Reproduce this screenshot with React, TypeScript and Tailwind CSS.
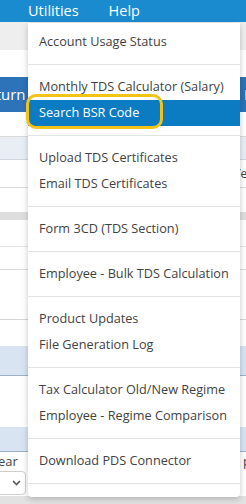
import React from "react";

const Sep = () => <div className="my-[9px] h-px bg-[#e3e3e3]" />;

const Item = ({ label, active }: { label: string; active?: boolean }) => (
  <div
    className={
      "flex h-[26px] items-center whitespace-nowrap px-[11px] text-[12.7px] " +
      (active ? "bg-[#0c7cc2] text-white" : "text-[#424242]")
    }
  >
    {label}
  </div>
);

export default function App() {
  return (
    <div className="relative h-[504px] w-[246px] overflow-hidden bg-white font-['Open_Sans',sans-serif]">
      {/* background page */}
      <div className="flex h-[22px] items-center bg-[#1b8bd0] text-[14.5px] text-white">
        <span className="ml-[28px]">Utilities</span>
        <span className="ml-[30px]">Help</span>
      </div>
      <div className="h-[28px] bg-[#eeeeee]" />
      <div className="h-[27px] bg-white" />
      <div className="flex h-[35px] items-center justify-between bg-[#2c73b9] text-[15px] text-white">
        <span className="-ml-[22px]">Return</span>
        <span className="-mr-[14px]">Fa</span>
      </div>
      <div className="h-[25px] border-b border-[#d9d9d9] bg-white" />
      <div className="h-[23px] border-b border-[#cfd6de] bg-[#e9eef5]" />
      <div className="flex h-[28px] items-center justify-end border-b border-[#dcdcdc] bg-white text-[12px] text-[#444]">
        <span className="-mr-[8px]">Yea</span>
      </div>
      <div className="h-[24px] bg-white" />
      <div className="h-[8px] bg-[#dedede]" />
      <div className="h-[27px] border-b border-[#e6e6e6] bg-white" />
      <div className="h-[23px] border-b border-[#dcdcdc] bg-white" />
      <div className="h-[50px] border-b border-[#d6d6d6] bg-white" />
      <div className="h-[26px] bg-white" />
      <div className="h-[30px] border-b border-[#9eb1c5] bg-[#d8e4f2]" />
      <div className="h-[51px] bg-white" />
      <div className="h-[25px] border-b border-[#9eb1c5] bg-[#d8e4f2]" />
      <div className="flex h-[19px] items-center justify-between bg-white text-[13px] text-[#444]">
        <span className="-ml-[2px]">ear</span>
        <span className="-mr-[5px]">p</span>
      </div>
      <div className="flex h-[25px] items-start bg-white">
        <div className="-ml-[10px] flex h-[24px] w-[36px] items-center justify-end rounded-[4px] border border-[#cfcfcf] pr-[4px] text-[#555]">
          <svg width="9" height="6" viewBox="0 0 9 6">
            <path d="M1 1l3.5 3.5L8 1" fill="none" stroke="#555" strokeWidth="1.6" />
          </svg>
        </div>
      </div>
      <div className="h-[10px] bg-[#e2e2e2]" />

      {/* dropdown menu */}
      <div className="absolute left-[28px] top-[23px] w-[212px] rounded-b-[4px] bg-white pb-[4px] pt-[6px] shadow-[0_2px_6px_rgba(0,0,0,0.22)]">
        <Item label="Account Usage Status" />
        <Sep />
        <Item label="Monthly TDS Calculator (Salary)" />
        <Item label="Search BSR Code" active />
        <Sep />
        <Item label="Upload TDS Certificates" />
        <Item label="Email TDS Certificates" />
        <Sep />
        <Item label="Form 3CD (TDS Section)" />
        <Sep />
        <Item label="Employee - Bulk TDS Calculation" />
        <Sep />
        <Item label="Product Updates" />
        <Item label="File Generation Log" />
        <Sep />
        <Item label="Tax Calculator Old/New Regime" />
        <Item label="Employee - Regime Comparison" />
        <Sep />
        <Item label="Download PDS Connector" />
        <Sep />
      </div>

      {/* annotation ring */}
      <div className="absolute left-[26px] top-[94px] h-[35px] w-[137px] rounded-[10px] border-[3px] border-[#f2c318]" />
    </div>
  );
}
